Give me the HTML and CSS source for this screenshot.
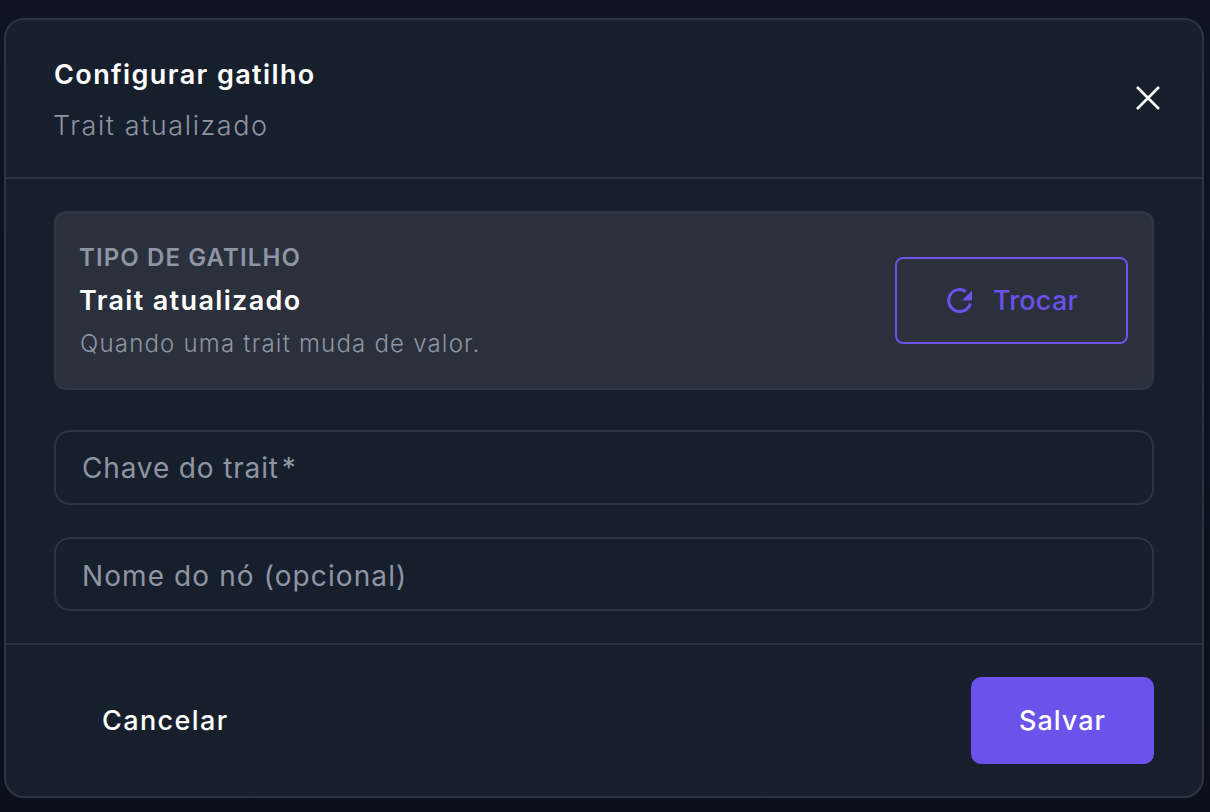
FILE: index.html
```html
<!DOCTYPE html>
<html lang="pt-BR">
<head>
<meta charset="utf-8">
<title>Configurar gatilho</title>
<link rel="stylesheet" href="styles.css">
</head>
<body>
<div class="dialog">
  <header class="head">
    <div class="head-text">
      <h2 class="title">Configurar gatilho</h2>
      <p class="subtitle">Trait atualizado</p>
    </div>
    <button class="close" aria-label="Fechar">
      <svg viewBox="0 0 24 24" width="24" height="24" fill="none" stroke="#fff" stroke-width="2.6"><path d="M1 1 L23 23 M23 1 L1 23"/></svg>
    </button>
  </header>
  <div class="body">
    <section class="card">
      <div class="card-text">
        <div class="eyebrow">TIPO DE GATILHO</div>
        <div class="card-title">Trait atualizado</div>
        <div class="card-desc">Quando uma trait muda de valor.</div>
      </div>
      <button class="swap">
        <svg viewBox="0 0 25 25" width="25" height="25" fill="none"><path d="M23.3 15.5A11 11 0 1 1 18.8 3.4" stroke="#6a52ea" stroke-width="3"/><path d="M25 2.5V12.5H15z" fill="#6a52ea"/></svg>
        <span>Trocar</span>
      </button>
    </section>
    <div class="field"><span>Chave do trait<span class="star">*</span></span></div>
    <div class="field"><span>Nome do nó (opcional)</span></div>
  </div>
  <footer class="foot">
    <button class="cancel">Cancelar</button>
    <button class="save">Salvar</button>
  </footer>
</div>
</body>
</html>
```
FILE: styles.css
```css
* { box-sizing: border-box; }
html, body { height: 100%; }
body {
  margin: 0;
  padding: 18px 6px 14px 4px;
  background: linear-gradient(180deg, #0e1424 0%, #0b101b 100%);
  font-family: Inter, "Liberation Sans", sans-serif;
  color: #fff;
}
button { font-family: inherit; border: 0; background: none; color: inherit; padding: 0; }
.dialog {
  height: 780px;
  display: flex;
  flex-direction: column;
  background: #181f2c;
  border: 2px solid #2c3443;
  border-radius: 20px;
}
.head {
  height: 159px;
  display: flex;
  align-items: center;
  justify-content: space-between;
  padding: 4px 42px 0 48px;
  border-bottom: 2px solid #2c3443;
}
.title { margin: 0; font-size: 27px; line-height: 36px; font-weight: 600; letter-spacing: 1.4px; }
.subtitle { margin: 15px 0 0 -1px; font-size: 27px; line-height: 36px; font-weight: 300; color: #8f95a3; letter-spacing: 1.6px; }
.close { display: flex; margin-bottom: 5px; }
.body { flex: 1; padding: 32px 48px; display: flex; flex-direction: column; }
.card {
  height: 179px;
  display: flex;
  align-items: center;
  justify-content: space-between;
  padding: 0 24px;
  background: #2a303c;
  border: 2px solid #2e3745;
  border-radius: 12px;
}
.eyebrow { margin-left: -1px; font-size: 24px; line-height: 30px; font-weight: 600; color: #8f95a3; letter-spacing: 1.1px; }
.card-title { margin: 10px 0 0 -1px; font-size: 27px; line-height: 36px; font-weight: 600; letter-spacing: 1.35px; }
.card-desc { font-size: 24px; line-height: 30px; font-weight: 300; color: #8f95a3; margin-top: 10px; letter-spacing: 1.2px; }
.swap {
  width: 233px;
  height: 87px;
  display: flex;
  align-items: center;
  justify-content: center;
  gap: 21px;
  padding-left: 2px;
  border: 2px solid #6a52ea;
  border-radius: 8px;
  color: #6a52ea;
  font-size: 27px;
  font-weight: 500;
  letter-spacing: 0.2px;
}
.field {
  height: 75px;
  margin-top: 40px;
  display: flex;
  align-items: center;
  padding: 1px 26px 0;
  border: 2px solid #2a3643;
  border-radius: 16px;
  font-size: 28px;
  font-weight: 400;
  color: #8f95a3;
  letter-spacing: 0.85px;
}
.field + .field { margin-top: 32px; height: 74px; padding-top: 3px; letter-spacing: 1.1px; }
.star { margin-left: 3px; }
.foot {
  height: 153px;
  display: flex;
  align-items: center;
  justify-content: space-between;
  padding: 0 48px;
  border-top: 2px solid #2c3443;
}
.cancel { padding: 0 48px; font-size: 27px; font-weight: 500; letter-spacing: 1.4px; }
.save {
  width: 183px;
  height: 87px;
  background: #6a52ea;
  border-radius: 10px;
  font-size: 27px;
  font-weight: 500;
  letter-spacing: 1px;
}
```
